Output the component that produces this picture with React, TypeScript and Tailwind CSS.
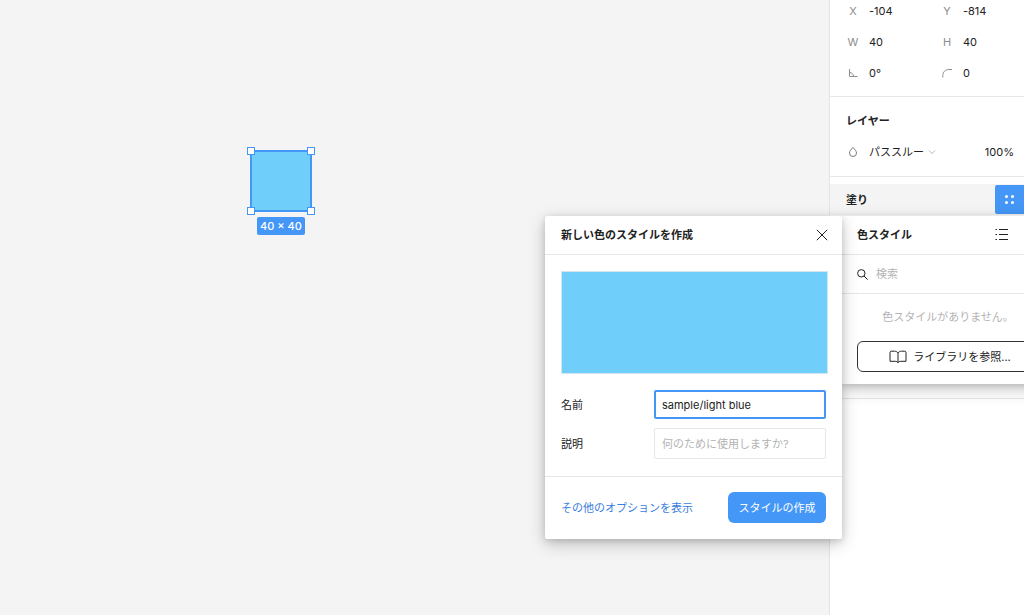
import type { ReactNode } from 'react'

const handles = [
  '-top-[5px] -left-[5px]',
  '-top-[5px] -right-[5px]',
  '-bottom-[5px] -left-[5px]',
  '-bottom-[5px] -right-[5px]',
]

function AngleIcon() {
  return (
    <svg width="10" height="10" viewBox="0 0 10 10" fill="none" stroke="currentColor" aria-hidden="true">
      <path d="M1.500 1v7.500H9.500" />
      <path d="M1.500 4.500c2.400 0 4 1.600 4 4" />
    </svg>
  )
}

function CornerIcon() {
  return (
    <svg width="10" height="10" viewBox="0 0 10 10" fill="none" stroke="currentColor" aria-hidden="true">
      <path d="M.8 9.500V7.800C.8 4 3.300 1.500 7 1.500h3" />
    </svg>
  )
}

function DropIcon() {
  return (
    <svg width="10" height="12" viewBox="0 0 10 12" fill="none" stroke="currentColor" aria-hidden="true">
      <path d="M5 1.500C3.200 3.500 1.500 5 1.500 7a3.500 3.500 0 0 0 7 0C8.500 5 6.800 3.500 5 1.500z" />
    </svg>
  )
}

function BookIcon() {
  return (
    <svg width="18" height="14" viewBox="0 0 18 14" fill="none" stroke="currentColor" aria-hidden="true">
      <path d="M9 3C8.300 1.800 7 1.200 5.500 1.200H2.200c-.6 0-1.200.5-1.200 1.200v8.900h5.200c1.400 0 2.300.5 2.800 1.500.5-1 1.400-1.500 2.800-1.500H17V2.400c0-.7-.6-1.200-1.200-1.200h-3.300C11 1.200 9.700 1.800 9 3z" />
      <path d="M9 3v9.500" />
    </svg>
  )
}

const fields: { id: string; label: string; mark: ReactNode; value: string }[] = [
  { id: 'x', label: 'X', mark: 'X', value: '-104' },
  { id: 'y', label: 'Y', mark: 'Y', value: '-814' },
  { id: 'w', label: 'W', mark: 'W', value: '40' },
  { id: 'h', label: 'H', mark: 'H', value: '40' },
  { id: 'angle', label: 'Rotation', mark: <AngleIcon />, value: '0°' },
  { id: 'radius', label: 'Corner radius', mark: <CornerIcon />, value: '0' },
]

function Canvas() {
  return (
    <main className="relative min-w-0 flex-1 bg-[#f4f4f4]">
      <div className="absolute top-[150px] left-[250px] flex flex-col items-center">
        <div className="relative h-[62px] w-[62px] border-2 border-[#4597f7] bg-[#70cffa]">
          {handles.map((pos) => (
            <span key={pos} className={`absolute h-2 w-2 border border-[#4597f7] bg-white ${pos}`} />
          ))}
        </div>
        <span className="mt-[5px] rounded-xs bg-[#4597f7] px-[3px] text-[11px] leading-[18px] font-medium whitespace-nowrap text-white">
          40 × 40
        </span>
      </div>
    </main>
  )
}

function Inspector() {
  return (
    <aside className="w-[195px] shrink-0 border-l border-[#e4e4e4] bg-white">
      <section className="grid grid-cols-[94px_1fr] gap-y-[9px] border-b border-[#e6e6e6] pr-2 pb-3 pl-4">
        {fields.map((field) => (
          <div key={field.id} className="flex h-[22px] items-center">
            <label
              htmlFor={field.id}
              aria-label={field.label}
              className="flex w-[14px] shrink-0 justify-center text-[#8c8c8c]"
            >
              {field.mark}
            </label>
            <input
              id={field.id}
              defaultValue={field.value}
              className="ml-[9px] w-full min-w-0 bg-transparent outline-none"
            />
          </div>
        ))}
      </section>

      <section className="border-b border-[#e6e6e6] px-4 pt-[13px] pb-[13px]">
        <h2 className="leading-[22px] font-bold">レイヤー</h2>
        <div className="mt-[9px] flex h-[22px] items-center">
          <span className="flex w-[14px] justify-center text-[#7c7c7c]">
            <DropIcon />
          </span>
          <select aria-label="レイヤー" className="ml-[9px] appearance-none bg-transparent outline-none">
            <option>パススルー</option>
          </select>
          <svg className="ml-1 text-[#b3b3b3]" width="8" height="6" viewBox="0 0 8 6" fill="none" stroke="currentColor" aria-hidden="true">
            <path d="M1 1.500l3 3 3-3" />
          </svg>
          <input
            aria-label="Opacity"
            defaultValue="100%"
            className="-mr-[6px] ml-auto w-10 bg-transparent text-right outline-none"
          />
        </div>
      </section>

      <section className="mt-[7px] h-[215px] border-b border-[#e6e6e6]">
        <div className="flex h-[31px] items-center justify-between bg-[#f4f4f4] pl-4">
          <h2 className="font-bold">塗り</h2>
          <button
            type="button"
            aria-label="Styles"
            className="flex h-[29px] w-[29px] items-center justify-center rounded-l-xs bg-[#4597f7] text-white"
          >
            <svg width="11" height="11" viewBox="0 0 11 11" fill="currentColor" aria-hidden="true">
              <circle cx="2.500" cy="2.500" r="1.500" />
              <circle cx="8.500" cy="2.500" r="1.500" />
              <circle cx="2.500" cy="8.500" r="1.500" />
              <circle cx="8.500" cy="8.500" r="1.500" />
            </svg>
          </button>
        </div>
      </section>
    </aside>
  )
}

function StylePicker() {
  return (
    <div className="absolute top-[216px] -right-[35px] w-[218px] rounded-xs bg-white pb-3 shadow-[0_5px_17px_rgba(0,0,0,0.2),0_2px_7px_rgba(0,0,0,0.15)]">
      <div className="flex h-[39px] items-center justify-between border-b border-[#e6e6e6] pr-[50px] pl-4">
        <h2 className="font-bold">色スタイル</h2>
        <button type="button" aria-label="List view">
          <svg width="14" height="12" viewBox="0 0 14 12" fill="none" stroke="currentColor" aria-hidden="true">
            <path d="M.5.5H2M4 .5h9M.5 5.500H2M4 5.500h9M.5 10.500H2M4 10.500h9" />
          </svg>
        </button>
      </div>
      <label className="flex h-[39px] items-center gap-2 border-b border-[#e6e6e6] px-4">
        <svg width="11" height="11" viewBox="0 0 11 11" fill="none" stroke="currentColor" className="shrink-0" aria-hidden="true">
          <circle cx="4.300" cy="4.300" r="3.700" />
          <path d="M7 7l3.600 3.600" />
        </svg>
        <input placeholder="検索" className="w-full min-w-0 outline-none placeholder:text-[#b3b3b3]" />
      </label>
      <p className="py-[15px] pr-1 text-center leading-[17px] text-[#b3b3b3]">色スタイルがありません。</p>
      <div className="px-4">
        <button
          type="button"
          className="flex h-[31px] w-full items-center justify-center gap-[6px] rounded-md border border-[#333333]"
        >
          <BookIcon />
          ライブラリを参照...
        </button>
      </div>
    </div>
  )
}

function CreateStyleDialog() {
  return (
    <div
      role="dialog"
      aria-labelledby="dialog-title"
      className="absolute top-[216px] right-[182px] z-10 w-[297px] rounded-xs bg-white shadow-[0_5px_17px_rgba(0,0,0,0.2),0_2px_7px_rgba(0,0,0,0.15)]"
    >
      <div className="flex h-[39px] items-center justify-between border-b border-[#e6e6e6] pr-[14px] pl-4">
        <h2 id="dialog-title" className="font-bold">
          新しい色のスタイルを作成
        </h2>
        <button type="button" aria-label="Close">
          <svg width="12" height="12" viewBox="0 0 12 12" fill="none" stroke="currentColor" aria-hidden="true">
            <path d="M.8.8l10.400 10.400M11.200.8L.8 11.200" />
          </svg>
        </button>
      </div>

      <div className="pt-4 pr-[14px] pl-4">
        <div className="h-[103px] border border-[#d5e6ee] bg-[#70cffa]" />
      </div>

      <form>
        <div className="grid grid-cols-[1fr_172px] items-center gap-y-[9px] border-b border-[#e6e6e6] px-4 pt-4 pb-[17px]">
          <label htmlFor="style-name">名前</label>
          <input
            id="style-name"
            defaultValue="sample/light blue"
            className="h-[29px] min-w-0 rounded-xs border-2 border-[#4597f7] px-[6px] leading-normal outline-none"
          />
          <label htmlFor="style-description">説明</label>
          <input
            id="style-description"
            placeholder="何のために使用しますか?"
            className="h-[31px] min-w-0 rounded-xs border border-[#e6e6e6] px-[7px] leading-[17px] outline-none placeholder:text-[#b3b3b3]"
          />
        </div>

        <div className="flex items-center justify-between px-4 pt-[15px] pb-4">
          <a href="#options" className="text-[#3a7de0]">
            その他のオプションを表示
          </a>
          <button type="button" className="h-[31px] w-[98px] rounded-md bg-[#4597f7] text-white">
            スタイルの作成
          </button>
        </div>
      </form>
    </div>
  )
}

export default function App() {
  return (
    <div className="relative flex min-h-screen overflow-hidden font-['Inter','Noto_Sans_CJK_JP',sans-serif] text-[11px] leading-[16px] text-[#222222]">
      <Canvas />
      <Inspector />
      <StylePicker />
      <CreateStyleDialog />
    </div>
  )
}
